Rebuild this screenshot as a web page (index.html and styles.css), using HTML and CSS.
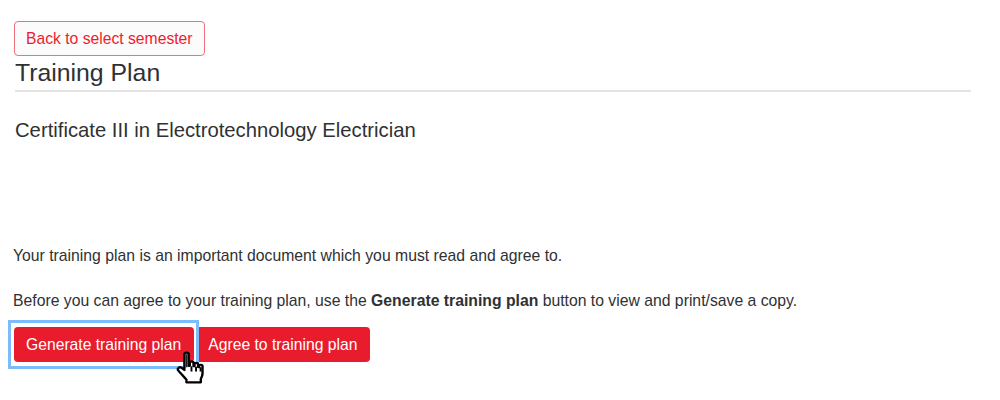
FILE: index.html
```html
<!DOCTYPE html>
<html lang="en">
<head>
<meta charset="utf-8">
<title>Training Plan</title>
<link rel="stylesheet" href="styles.css">
</head>
<body>
<main class="page">
  <a class="btn btn-outline" href="#">Back to select semester</a>
  <header class="heading">
    <h1>Training Plan</h1>
  </header>
  <h2>Certificate III in Electrotechnology Electrician</h2>
  <p class="intro">Your training plan is an important document which you must read and agree to.</p>
  <p class="note">Before you can agree to your training plan, use the <strong>Generate training plan</strong> button to view and print/save a copy.</p>
  <div class="actions">
    <a class="btn btn-solid" href="#">Generate training plan</a>
    <a class="btn btn-solid" href="#">Agree to training plan</a>
    <span class="focus-ring"></span>
    <svg class="cursor" viewBox="0 0 30 36" width="36" height="39" preserveAspectRatio="none" aria-hidden="true">
      <path d="M9.5 3.2c0-2.3 3.6-2.3 3.6 0v10.6l.9-.2V11c0-1.8 3.1-1.8 3.1 0v3l.8.1v-1.9c0-1.7 3-1.7 3 0v2.5l.8.2v-1c0-1.7 2.9-1.6 2.9.2v6.6c0 2.2-.7 3.4-1.4 5v3.2H11.2v-2.4c-1.3-1.8-3.8-4.7-6.6-8.2-1.6-2 .7-4.3 2.7-2.7l2.2 2z" fill="#fff" stroke="#000" stroke-width="2" stroke-linejoin="round"/>
      <path d="M11.3 3v12" fill="none" stroke="#222" stroke-width="1.6"/>
      <path d="M15.4 14v5M19.2 14.5v4.5M23 15v4" fill="none" stroke="#000" stroke-width="1.6"/>
    </svg>
  </div>
</main>
</body>
</html>
```
FILE: styles.css
```css
* { box-sizing: border-box; }
html, body { margin: 0; background: #fff; }
body {
  font-family: "Liberation Sans", Arial, sans-serif;
  color: #2f3133;
  width: 1000px;
  height: 400px;
  overflow: hidden;
}
.page {
  padding: 21px 29px 0 13px;
  display: flex;
  flex-direction: column;
  align-items: flex-start;
}
.btn {
  display: inline-flex;
  align-items: center;
  height: 35px;
  padding: 0 12.5px 0 12px;
  border-radius: 4px;
  font-size: 15.7px;
  text-decoration: none;
  white-space: nowrap;
}
.btn-outline {
  margin-left: 1px;
  padding: 0 11px;
  color: #ee1c2e;
  background: #fbfbfb;
  border: 1px solid #f0717c;
}
.btn-solid {
  color: #fff;
  background: #e81c2c;
}
.heading {
  align-self: stretch;
  margin-left: 2px;
  height: 36px;
  border-bottom: 2px solid #e4e4e2;
}
h1 {
  margin: 0;
  font-size: 24.8px;
  font-weight: 400;
  line-height: 33px;
}
h2 {
  margin: 26px 0 0 2px;
  font-size: 20.25px;
  font-weight: 400;
  line-height: 24px;
}
.intro {
  margin: 104px 0 0;
  font-size: 15.75px;
  line-height: 20px;
}
.note {
  margin: 25px 0 0;
  font-size: 15.75px;
  line-height: 20px;
}
.actions {
  position: relative;
  margin: 16px 0 0 1px;
  display: flex;
  gap: 2.5px;
}
.focus-ring {
  position: absolute;
  left: -6px;
  top: -7px;
  width: 191px;
  height: 49px;
  border: 3.5px solid #7cbcfd;
}
.cursor {
  position: absolute;
  left: 159px;
  top: 24px;
}
```
